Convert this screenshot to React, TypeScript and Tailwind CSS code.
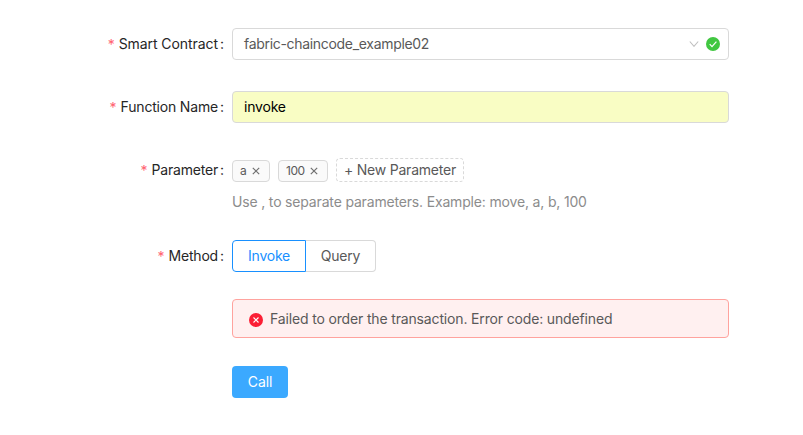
import type { ReactNode } from 'react';

function Row({ label, spacing = '', className = '', children }: { label?: string; spacing?: string; className?: string; children: ReactNode }) {
  return (
    <div className={`flex ${className}`}>
      <div className="flex h-8 w-[232px] shrink-0 items-center justify-end pr-2 text-[#262626]">
        {label && (
          <>
            <span className="mr-1 mt-0.5 text-sm text-[#ff6270]">*</span>
            <span className={spacing}>{label}</span>
            <span className="ml-0.5 w-1">:</span>
          </>
        )}
      </div>
      <div className="w-[497px]">{children}</div>
    </div>
  );
}

function Tag({ text, width }: { text: string; width: string }) {
  return (
    <span className={`flex h-[22px] items-center rounded border border-[#d9d9d9] bg-[#fafafa] pl-[7px] text-xs tracking-[-0.5px] text-[#595959] ${width}`}>
      {text}
      <svg viewBox="0 0 8 8" className="mr-[9px] mb-px ml-auto size-2" fill="none" stroke="#707070" strokeWidth="1.2">
        <path d="M.8.8 7.2 7.2M7.2.8.8 7.2" />
      </svg>
    </span>
  );
}

export default function App() {
  return (
    <div className="h-[435px] w-[803px] overflow-hidden bg-white pt-7 font-['Inter',sans-serif] text-sm leading-[22px] whitespace-nowrap text-[#595959]">
      <Row label="Smart Contract" spacing="tracking-[-0.07px]">
        <div className="flex h-8 items-center rounded border border-[#d9d9d9] pl-[11px]">
          <span className="tracking-[-0.31px]">fabric-chaincode_example02</span>
          <svg viewBox="0 0 10 6" className="mb-px ml-auto h-1.5 w-2.5" fill="none" stroke="#bfbfbf" strokeWidth="1.1">
            <path d="M.8.5 5 5.3 9.2.5" />
          </svg>
          <svg viewBox="0 0 14 14" className="mr-2 ml-[7px] size-[14px]">
            <circle cx="7" cy="7" r="7" fill="#41c741" />
            <path d="m3.7 7.2 2.3 2.4 4.4-5" fill="none" stroke="white" strokeWidth="1.2" />
          </svg>
        </div>
      </Row>
      <Row label="Function Name" spacing="tracking-[-0.18px]" className="mt-[31px]">
        <div className="flex h-8 items-center rounded border border-[#d9d9d9] bg-[#f9fdc4] pl-[11px] text-black">
          <span className="tracking-[-0.2px]">invoke</span>
        </div>
      </Row>
      <Row label="Parameter" spacing="tracking-[-0.2px]" className="mt-[31px]">
        <div className="mt-1 flex h-6 items-end gap-2">
          <Tag text="a" width="w-[38px]" />
          <Tag text="100" width="w-[50px]" />
          <button className="flex h-6 w-32 items-center rounded border border-dashed border-[#d9d9d9] pl-[7px]">
            <span className="tracking-[-0.22px]">+ New Parameter</span>
          </button>
        </div>
        <p className="mt-[9px] tracking-[-0.17px] text-[#8c8c8c]">Use , to separate parameters. Example: move, a, b, 100</p>
      </Row>
      <Row label="Method" spacing="tracking-[-0.2px]" className="mt-[27px]">
        <div className="flex h-8">
          <button className="flex w-[74px] items-center justify-center rounded-l border border-[#1890ff] tracking-[-0.25px] text-[#1890ff]">Invoke</button>
          <button className="flex w-[70px] items-center justify-center rounded-r border border-l-0 border-[#d9d9d9] tracking-[-0.2px]">Query</button>
        </div>
      </Row>
      <Row className="mt-[27px]">
        <div className="flex h-[39px] items-center rounded border border-[#ffa39e] bg-[#fff0f0] pl-4">
          <svg viewBox="0 0 14 14" className="mt-0.5 size-[14px]">
            <circle cx="7" cy="7" r="7" fill="#fb1f35" />
            <path d="m4.5 4.5 5 5m0-5-5 5" stroke="white" strokeWidth="1.1" />
          </svg>
          <span className="ml-[7px] tracking-[-0.155px]">Failed to order the transaction. Error code: undefined</span>
        </div>
      </Row>
      <Row className="mt-7">
        <button className="flex h-8 w-14 items-center justify-center rounded bg-[#3ba9ff] tracking-[-0.1px] text-white">Call</button>
      </Row>
    </div>
  );
}
